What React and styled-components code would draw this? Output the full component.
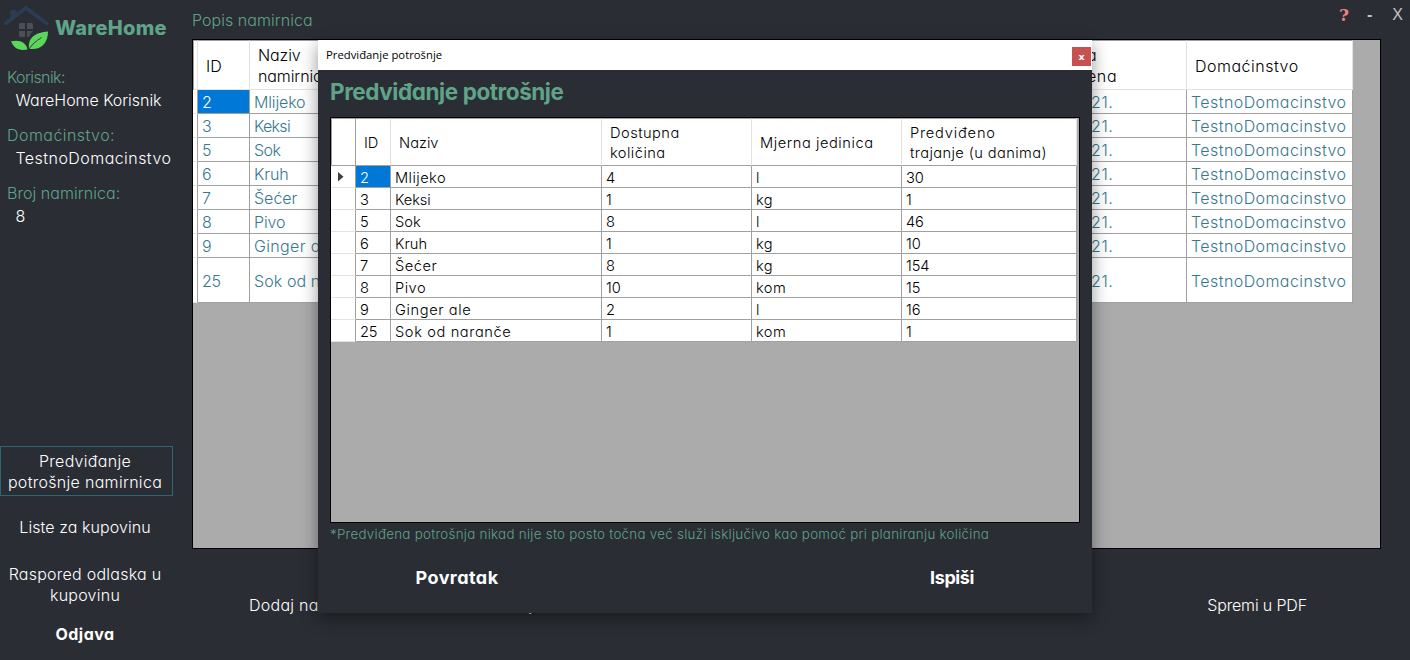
import React from 'react';
import styled, { createGlobalStyle, css } from 'styled-components';

const c = {
  bg: '#2a2d34', green: '#5fa388', teal: '#37788f', line: '#a0a0a0',
  pale: '#e3e3e3', blue: '#0078d7', grey: '#ababab',
};

const GlobalStyle = createGlobalStyle`
  * { box-sizing: border-box; }
  body { margin: 0; background: ${c.bg}; }
`;

const Screen = styled.div`
  position: relative;
  display: flex;
  width: 1410px;
  height: 660px;
  overflow: hidden;
  background: ${c.bg};
  color: #fff;
  font: 300 16px/21px Inter, 'Liberation Sans', sans-serif;
  font-feature-settings: 'cv11' 1;
  white-space: nowrap;
`;

const Text = styled.span`
  letter-spacing: ${p => p.$track || 0}px;
`;

/* ---------- sidebar ---------- */
const Sidebar = styled.aside`
  display: flex;
  flex-direction: column;
  width: 192px;
  padding-bottom: 14px;
`;
const Brand = styled.div`
  display: flex;
  height: 65px;
  padding: 4px 0 0 3px;
`;
const BrandName = styled.span`
  margin: 12px 0 0 4px;
  font-size: 20px;
  font-weight: 800;
  line-height: 24px;
  letter-spacing: 0.3px;
  font-feature-settings: normal;
  color: ${c.green};
`;
const Info = styled.dl`
  margin: 0 0 12px;
`;
const InfoLabel = styled.dt`
  padding-left: 7px;
  line-height: 24px;
  color: ${c.green};
`;
const InfoValue = styled.dd`
  margin: 0;
  padding-left: 15.5px;
  line-height: 22px;
`;
const Nav = styled.nav`
  display: flex;
  flex-direction: column;
  margin-top: auto;
`;
const NavItem = styled.button`
  width: 173px;
  height: ${p => p.$h}px;
  margin: 0 0 ${p => p.$gap || 0}px;
  padding: ${p => p.$top || 0}px 3px 0 0;
  border: 1px solid ${p => (p.$active ? '#2d6573' : 'transparent')};
  background: none;
  color: inherit;
  font: inherit;
  font-weight: ${p => (p.$bold ? 700 : 300)};
  font-feature-settings: inherit;
`;

/* ---------- main area ---------- */
const Main = styled.main`
  display: flex;
  flex-direction: column;
  width: 1189px;
`;
const TopBar = styled.header`
  display: flex;
  width: 1218px;
  height: 39px;
  color: ${c.green};
  line-height: 40px;
`;
const WindowButtons = styled.div`
  display: flex;
  margin-left: auto;
  padding-right: 7px;
  gap: 18px;
  line-height: 30px;
  color: #c4c4c4;
  font-family: 'Liberation Sans', sans-serif;
  font-weight: 400;
`;
const Minimise = styled.span`
  font-weight: 700;
  margin-right: 2px;
`;
const Help = styled.span`
  color: #f08080;
  font: 700 17px/30px 'DejaVu Serif', serif;
`;
const Grid = styled.section`
  height: ${p => p.$h}px;
  border: 1px solid #000;
  background: ${c.grey};
  color: ${p => p.$color || '#000'};
`;
const Row = styled.div`
  display: flex;
  width: ${p => p.$w}px;
  height: ${p => p.$h}px;
`;
const cellBase = css`
  display: flex;
  flex: none;
  align-items: center;
  overflow: hidden;
  width: ${p => p.$w}px;
  background: #fff;
`;
const HeadCell = styled.div`
  ${cellBase}
  padding: 2px 0 0 ${p => p.$pad ?? 8}px;
  border-top: 1px solid ${c.line};
  border-right: 1px solid ${c.pale};
  border-bottom: 1px solid ${p => p.$bottom || c.pale};
  color: #000;
`;
const Cell = styled.div`
  ${cellBase}
  padding: ${p => p.$top ?? 2}px 0 0 ${p => p.$pad ?? 4}px;
  border-right: 1px solid ${c.line};
  border-bottom: 1px solid ${c.line};
  ${p => p.$selected && css`background: ${c.blue}; color: #fff;`}
`;
const RowHead = styled.div`
  ${cellBase}
  padding-left: ${p => (p.$w > 10 ? 7 : 0)}px;
  border-right: 1px solid ${c.line};
  border-bottom: 1px solid ${c.pale};
`;
const CornerCell = styled(RowHead)`
  border-top: 1px solid ${c.line};
  border-left: 1px solid ${c.line};
  border-bottom-color: ${p => p.$bottom || c.pale};
  border-right-color: ${p => p.$right || c.line};
`;
const Actions = styled.footer`
  display: flex;
  padding: 46px 74px 0 57px;
`;
const Action = styled.span`
  margin-left: ${p => p.$ml || '0'};
`;

/* ---------- dialog ---------- */
const Dialog = styled.section`
  position: absolute;
  left: 318px;
  top: 40px;
  width: 774px;
  height: 573px;
  background: ${c.bg};
  box-shadow: 0 5px 16px rgba(0, 0, 0, 0.42);
`;
const TitleBar = styled.header`
  display: flex;
  align-items: center;
  justify-content: space-between;
  height: 30px;
  padding: 0 1px 0 8px;
  background: #fff;
  color: #000;
  font: 400 11.3px/20px 'Open Sans', sans-serif;
`;
const Close = styled.button`
  width: 19px;
  height: 19px;
  margin-top: 3px;
  padding: 0;
  border: 0;
  background: #c75050;
  color: #fff;
  font: 700 9.5px/17px 'DejaVu Sans', sans-serif;
`;
const DialogBody = styled.div`
  padding: 0 12px;
  font-size: 14.67px;
  line-height: 20px;
`;
const DialogTitle = styled.h1`
  margin: 0;
  height: 47px;
  color: ${c.green};
  font-size: 22.5px;
  font-weight: 700;
  line-height: 44px;
`;
const Note = styled.p`
  margin: 0;
  color: ${c.green};
  font-size: 13.33px;
  line-height: 22px;
`;
const DialogActions = styled.div`
  display: flex;
  justify-content: space-between;
  padding: 21px 106px 0 85.5px;
  font-size: 18px;
  font-weight: 700;
  line-height: 24px;
`;

const items = [
  { id: '2', name: 'Mlijeko', t: -0.15, d: 0.42, qty: '4', unit: 'l', days: '30' },
  { id: '3', name: 'Keksi', t: -0.7, d: -0.1, qty: '1', unit: 'kg', days: '1' },
  { id: '5', name: 'Sok', t: -0.5, d: 0, qty: '8', unit: 'l', days: '46' },
  { id: '6', name: 'Kruh', t: -0.1, d: 0, qty: '1', unit: 'kg', days: '10' },
  { id: '7', name: 'Šećer', t: 0, d: 0.5, qty: '8', unit: 'kg', days: '154' },
  { id: '8', name: 'Pivo', t: -0.1, d: 0.5, qty: '10', unit: 'kom', days: '15' },
  { id: '9', name: 'Ginger ale', t: 0.35, d: 0.6, qty: '2', unit: 'l', days: '16' },
  { id: '25', name: 'Sok od naranče', t: 0.1, d: 0.6, qty: '1', unit: 'kom', days: '1' },
];

const Logo = () => (
  <svg width="48" height="50" viewBox="3 4 48 50">
    <path d="M12.2 18V11.5H14.6V15.5" fill="none" stroke="#2b3d53" strokeWidth="3.6" />
    <path d="M5.8 23.3 26 8 46.5 23.3" fill="none" stroke="#2b3d53" strokeWidth="3.8" strokeLinecap="round" strokeLinejoin="round" />
    <path d="M20.5 23H25V29H19V24.5Q19 23 20.5 23ZM27 23H31.5Q33 23 33 24.5V29H27ZM19 31H25V37H20.5Q19 37 19 35.500ZM27 31H33Q30 34 29 37H27Z" fill="#4b4e54" />
    <path d="M11 41.200C20 39.500 26 42 27.500 49.500C18 51 14 48 11 41.200Z" fill="#5bd75c" />
    <path d="M29 48.800C27.500 37 36 32.500 48 31.500C48 44 40 50.500 29 48.800Z" fill="#5bd75c" />
    <path d="M28.500 49.500C32 44.500 36 41 41.500 37.500" fill="none" stroke="#2a2d34" strokeWidth="0.9" />
  </svg>
);

export default function App() {
  return (
    <Screen>
      <GlobalStyle />
      <Sidebar>
        <Brand><Logo /><BrandName>WareHome</BrandName></Brand>
        <Info>
          <InfoLabel><Text $track={-0.6}>Korisnik:</Text></InfoLabel>
          <InfoValue><Text $track={-0.05}>WareHome Korisnik</Text></InfoValue>
        </Info>
        <Info>
          <InfoLabel><Text $track={0.45}>Domaćinstvo:</Text></InfoLabel>
          <InfoValue><Text $track={0.45}>TestnoDomacinstvo</Text></InfoValue>
        </Info>
        <Info>
          <InfoLabel><Text $track={0.05}>Broj namirnica:</Text></InfoLabel>
          <InfoValue>8</InfoValue>
        </Info>
        <Nav>
          <NavItem $h={50} $gap={19} $top={2} $active>
            <Text $track={0.3}>Predviđanje<br />potrošnje namirnica</Text>
          </NavItem>
          <NavItem $h={24} $gap={24}><Text $track={0.07}>Liste za kupovinu</Text></NavItem>
          <NavItem $h={42} $gap={17}><Text $track={0.25}>Raspored odlaska u<br />kupovinu</Text></NavItem>
          <NavItem $h={24} $bold><Text $track={0.45}>Odjava</Text></NavItem>
        </Nav>
      </Sidebar>

      <Main>
        <TopBar>
          <Text $track={0.05}>Popis namirnica</Text>
          <WindowButtons><Help>?</Help><Minimise>-</Minimise><span>X</span></WindowButtons>
        </TopBar>
        <Grid $h={510} $color={c.teal}>
          <Row $w={1160} $h={50}>
            <CornerCell $w={5} $right={c.pale} />
            <HeadCell $w={52}>ID</HeadCell>
            <HeadCell $w={770}><Text $track={-0.1}>Naziv<br />namirnice</Text></HeadCell>
            <HeadCell $w={167} $pad={67}>
              <Text $track={0.6}>a<br />ena</Text>
            </HeadCell>
            <HeadCell $w={166}><Text $track={0.5}>Domaćinstvo</Text></HeadCell>
          </Row>
          {items.map((it, i) => (
            <Row key={it.id} $w={1160} $h={i === 7 ? 45 : 24}>
              <RowHead $w={5} />
              <Cell $w={52} $selected={i === 0}><Text $track={-0.3}>{it.id}</Text></Cell>
              <Cell $w={770}><Text $track={it.t}>{it.name}</Text></Cell>
              <Cell $w={167} $pad={71}><Text $track={0.6}>21.</Text></Cell>
              <Cell $w={166}><Text $track={0.42}>TestnoDomacinstvo</Text></Cell>
            </Row>
          ))}
        </Grid>
        <Actions>
          <Action><Text $track={0.25}>Dodaj namirnicu</Text></Action>
          <Action $ml="154px">j</Action>
          <Action $ml="auto"><Text $track={-0.15}>Spremi u PDF</Text></Action>
        </Actions>
      </Main>

      <Dialog>
        <TitleBar>Predviđanje potrošnje<Close>x</Close></TitleBar>
        <DialogBody>
          <DialogTitle><Text $track={-0.43}>Predviđanje potrošnje</Text></DialogTitle>
          <Grid $h={406}>
            <Row $w={746} $h={48}>
              <CornerCell $w={25} $bottom={c.line} />
              <HeadCell $w={35} $bottom={c.line}>ID</HeadCell>
              <HeadCell $w={211} $bottom={c.line}>Naziv</HeadCell>
              <HeadCell $w={150} $bottom={c.line}><Text $track={0.45}>Dostupna<br />količina</Text></HeadCell>
              <HeadCell $w={150} $bottom={c.line}><Text $track={0.55}>Mjerna jedinica</Text></HeadCell>
              <HeadCell $w={175} $bottom={c.line}>
                <span><Text $track={0.8}>Predviđeno</Text><br /><Text $track={0.4}>trajanje (u danima)</Text></span>
              </HeadCell>
            </Row>
            {items.map((it, i) => (
              <Row key={it.id} $w={746} $h={22}>
                <RowHead $w={25}>
                  {i === 0 && <svg width="6" height="10"><path d="M0 0 5.500 4.800 0 9.600Z" fill="#404040" /></svg>}
                </RowHead>
                <Cell $top={3} $w={35} $selected={i === 0}><Text $track={-0.2}>{it.id}</Text></Cell>
                <Cell $top={3} $w={211}><Text $track={it.d}>{it.name}</Text></Cell>
                <Cell $top={3} $w={150}>{it.qty}</Cell>
                <Cell $top={3} $w={150}><Text $track={0.4}>{it.unit}</Text></Cell>
                <Cell $top={3} $w={175}><Text $track={-0.1}>{it.days}</Text></Cell>
              </Row>
            ))}
          </Grid>
          <Note>
            <Text $track={0.285}>*Predviđena potrošnja nikad nije sto posto točna već služi isključivo kao pomoć pri planiranju količina</Text>
          </Note>
          <DialogActions>
            <Text $track={0.45}>Povratak</Text>
            <Text $track={-0.4}>Ispiši</Text>
          </DialogActions>
        </DialogBody>
      </Dialog>
    </Screen>
  );
}
